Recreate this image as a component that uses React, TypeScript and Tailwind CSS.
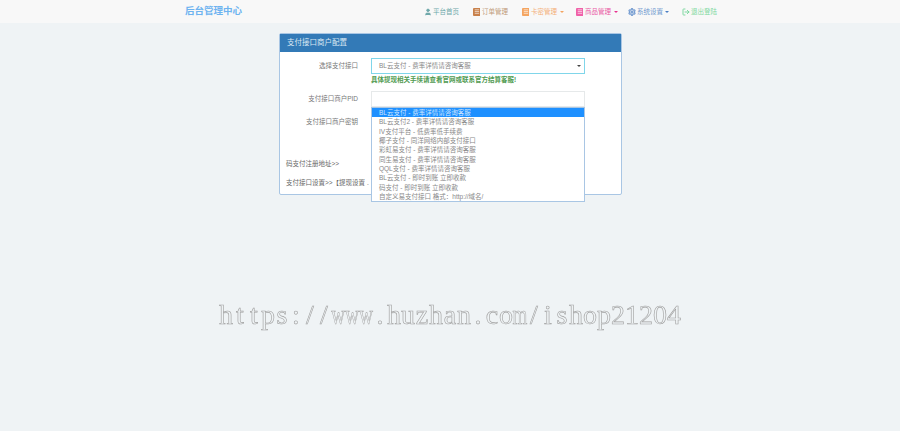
import { User, Settings, LogOut } from "lucide-react"

const font = { fontFamily: '"Liberation Sans", "Noto Sans CJK SC", sans-serif' }

const channels = [
  "BL云支付 - 费率详情请咨询客服",
  "BL云支付2 - 费率详情请咨询客服",
  "IV支付平台 - 低费率低手续费",
  "椰子支付 - 同洋网络内部支付接口",
  "彩虹易支付 - 费率详情请咨询客服",
  "同生易支付 - 费率详情请咨询客服",
  "QQL支付 - 费率详情请咨询客服",
  "BL云支付 - 即时到账 立即收款",
  "码支付 - 即时到账 立即收款",
  "自定义易支付接口 格式：http://域名/",
]

const watermark = "https://www.huzhan.com/ishop21204"

function Caret({ className }: { className: string }) {
  return <span className={`ml-px inline-block border-x-2 border-t-2 border-x-transparent ${className}`} />
}

function BookIcon({ className }: { className: string }) {
  return (
    <svg viewBox="0 0 8 9" className={`h-[8px] w-[7px] ${className}`} fill="currentColor">
      <path d="M0 1a1 1 0 0 1 1-1h7v9H1a1 1 0 0 1-1-1z" />
      <path d="M2 2h5M2 4h5M2 6h5" stroke="#fff" strokeWidth="0.7" />
    </svg>
  )
}

function NavBar() {
  return (
    <nav className="flex h-[23px] items-center bg-[#f8f8f8] pl-[185px] pr-[183px]">
      <span className="text-[9.5px] font-bold text-[#6db3f0]">后台管理中心</span>
      <div className="ml-auto flex items-center text-[6.5px]">
        <span className="flex items-center gap-[1px] text-[#6fa8aa]">
          <User className="h-[8px] w-[8px]" fill="currentColor" />
          平台首页
        </span>
        <span className="ml-[14px] flex items-center gap-[2px] text-[#c09a78]">
          <BookIcon className="text-[#c8804a]" />
          订单管理
        </span>
        <span className="ml-[14px] flex items-center gap-[2px] text-[#f4b078]">
          <BookIcon className="text-[#f4a460]" />
          卡密管理
          <Caret className="border-t-[#f4a460]" />
        </span>
        <span className="ml-[12px] flex items-center gap-[2px] text-[#ea5aa4]">
          <BookIcon className="text-[#f060a8]" />
          商品管理
          <Caret className="border-t-[#e8338f]" />
        </span>
        <span className="ml-[10px] flex items-center gap-[1px] text-[#6f98cf]">
          <Settings className="h-[8px] w-[8px]" strokeWidth={3.5} />
          系统设置
          <Caret className="border-t-[#4a7fc4]" />
        </span>
        <span className="ml-[13px] flex items-center gap-[1px] text-[#7fd8a0]">
          <LogOut className="h-[8px] w-[8px]" strokeWidth={3} />
          退出登陆
        </span>
      </div>
    </nav>
  )
}

function ConfigPanel() {
  return (
    <section className="ml-[279px] mt-[10px] h-[162px] w-[343px] rounded-[2px] border border-[#a9c6e4] bg-white">
      <h3 className="flex h-[18px] items-center bg-[#337ab7] pl-[7px] text-[7.5px] font-normal text-[#dbe8f3]">
        支付接口商户配置
      </h3>
      <div className="relative px-[6px] text-[6.5px] text-[#777]">
        <div className="mt-[6px] flex">
          <label className="w-[72px] pt-[3px] text-right">选择支付接口</label>
          <div className="ml-[13px] w-[214px]">
            <div className="flex h-[16px] items-center justify-between border border-[#80d6ea] bg-white pl-[7px] pr-[3px] text-[#888]">
              <span>BL云支付 - 费率详情请咨询客服</span>
              <Caret className="border-t-[#444]" />
            </div>
            <p className="mt-[1px] text-[6.5px] font-bold leading-[9px] text-[#4f9a4f]">
              具体提现相关手续请查看官网或联系官方结算客服!
            </p>
          </div>
        </div>
        <div className="mt-[7px] flex">
          <label className="w-[72px] pt-[3px] text-right">支付接口商户PID</label>
          <div className="ml-[13px] h-[16px] w-[214px] border border-[#e6e9ea]" />
        </div>
        <div className="mt-[7px] flex h-[16px]">
          <label className="w-[72px] pt-[3px] text-right">支付接口商户密钥</label>
        </div>
        <p className="mt-[29px] leading-[9px] text-[#666]">码支付注册地址&gt;&gt;</p>
        <p className="mt-[10px] leading-[9px] text-[#666]">支付接口设置&gt;&gt;【提现设置 .</p>

        <ul className="absolute left-[91px] top-[49px] w-[214px] border border-[#a9c6e4] bg-white text-[#888]">
          {channels.map((name, i) => (
            <li
              key={name}
              className={`h-[9.35px] truncate pl-[7px] leading-[9.35px] ${i === 0 ? "bg-[#1e90ff] text-[#cfe6ff]" : ""}`}
            >
              {name}
            </li>
          ))}
        </ul>
      </div>
    </section>
  )
}

export default function App() {
  return (
    <div className="relative h-[431px] w-[900px] overflow-hidden bg-[#eff3f5]" style={font}>
      <NavBar />
      <ConfigPanel />
      {/* watermark over the page, fixed-width serif cells */}
      <div className="absolute left-[219px] top-[298px] flex text-[28px] leading-[34px] text-transparent [will-change:transform] [-webkit-text-stroke:0.6px_#a0a0a0] [font-family:'Liberation_Serif',serif]">
        {watermark.split("").map((ch, i) => (
          <span
            key={i}
            className="flex w-[14px] justify-center"
            style={ch === "w" || ch === "m" ? { transform: "scaleX(0.68)" } : undefined}
          >
            {ch}
          </span>
        ))}
      </div>
    </div>
  )
}
